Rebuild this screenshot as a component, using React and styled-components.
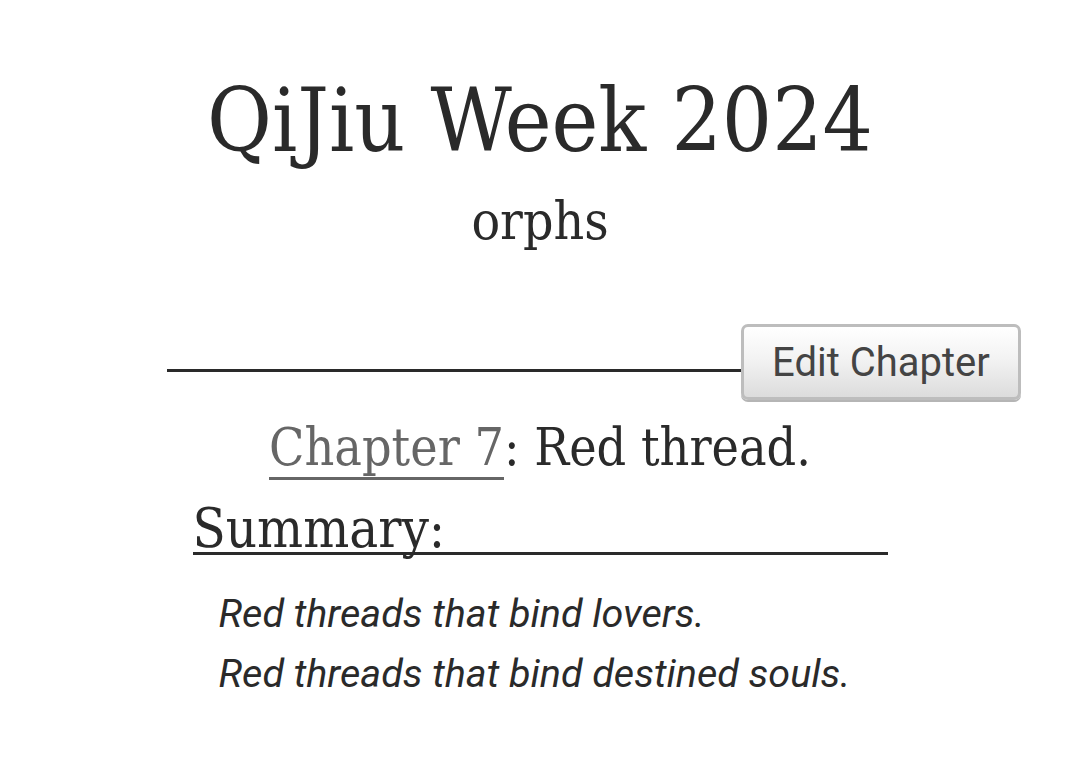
import React from "react";
import styled, { createGlobalStyle } from "styled-components";

const Global = createGlobalStyle`
  html, body { margin: 0; padding: 0; background: #fff; }
  body { color: #2a2a2a; font-family: "DejaVu Serif", "Liberation Serif", serif; }
`;

const Page = styled.main`
  display: flex;
  flex-direction: column;
  align-items: center;
  padding-top: 66px;
`;

const Title = styled.h1`
  margin: 0;
  font-family: "DejaVu Serif", serif;
  font-stretch: condensed;
  font-weight: 400;
  font-size: 88px;
  line-height: 110px;
  text-align: center;
`;

const Byline = styled.h2`
  margin: 10px 0 0;
  font-family: "DejaVu Serif", serif;
  font-stretch: condensed;
  font-weight: 400;
  font-size: 53px;
  line-height: 70px;
  text-align: center;
`;

const ActionRow = styled.div`
  align-self: stretch;
  display: flex;
  align-items: center;
  margin: 68px 59px 0 167px;
`;

const Rule = styled.div`
  flex: 1;
  border-top: 3px solid #2a2a2a;
  margin-top: 16px;
`;

const Button = styled.button`
  width: 280px;
  height: 76px;
  border: 3px solid #bdbdbd;
  border-radius: 7px;
  background: linear-gradient(#ffffff 0%, #f3f3f3 45%, #dcdcdc 100%);
  box-shadow: 0 2px 0 #b5b5b5;
  color: #444;
  font-family: Roboto, "Liberation Sans", sans-serif;
  font-size: 40px;
  padding: 0;
`;

const ChapterTitle = styled.h3`
  margin: 12px 0 0;
  font-family: "DejaVu Serif", serif;
  font-stretch: condensed;
  font-weight: 400;
  font-size: 51.5px;
  line-height: 70px;
  text-align: center;
`;

const ChapterLink = styled.a`
  color: #666;
  text-decoration: none;
  border-bottom: 3px solid #666;
`;

const Summary = styled.section`
  width: 695px;
  margin-top: 23px;
`;

const SummaryHeading = styled.h3`
  margin: 0;
  font-family: "DejaVu Serif", serif;
  font-stretch: condensed;
  font-weight: 400;
  font-size: 54px;
  line-height: 47px;
  border-bottom: 3px solid #2a2a2a;
`;

const Quote = styled.blockquote`
  margin: 29px 0 0 26px;
  font-family: Roboto, "Liberation Sans", sans-serif;
  font-style: italic;
  font-size: 39.5px;
  line-height: 60px;
  p { margin: 0; }
`;

export default function App() {
  return (
    <>
      <Global />
      <Page>
        <Title>QiJiu Week 2024</Title>
        <Byline>orphs</Byline>
        <ActionRow>
          <Rule />
          <Button>Edit Chapter</Button>
        </ActionRow>
        <ChapterTitle>
          <ChapterLink href="#">Chapter 7</ChapterLink>: Red thread.
        </ChapterTitle>
        <Summary>
          <SummaryHeading>Summary:</SummaryHeading>
          <Quote>
            <p>Red threads that bind lovers.</p>
            <p>Red threads that bind destined souls.</p>
          </Quote>
        </Summary>
      </Page>
    </>
  );
}
